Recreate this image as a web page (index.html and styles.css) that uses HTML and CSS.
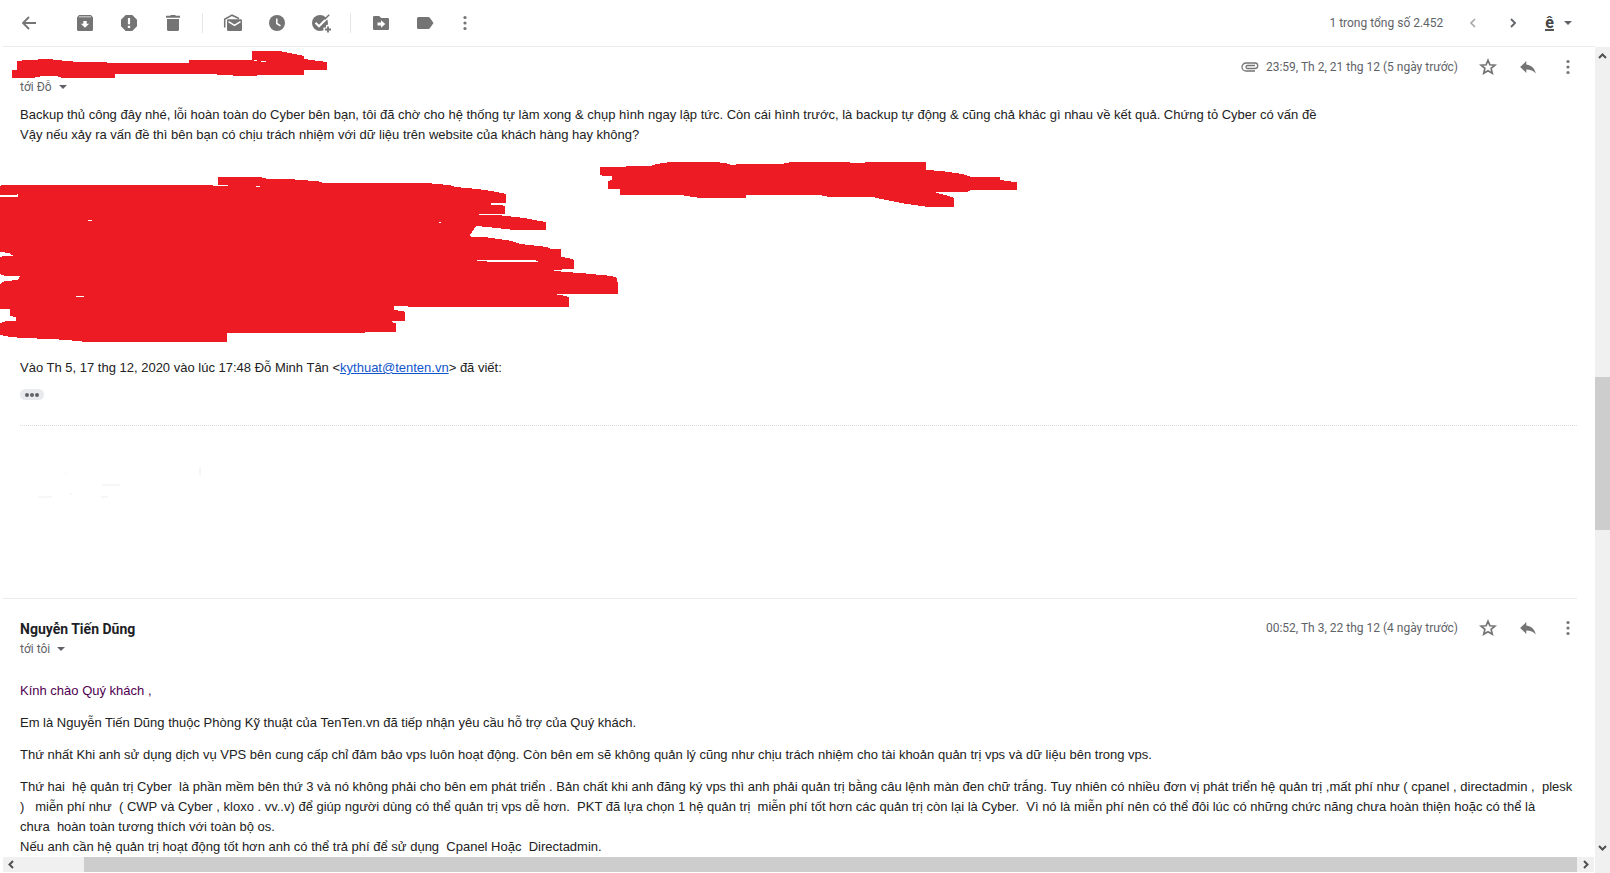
FILE: index.html
```html
<!DOCTYPE html>
<html lang="vi">
<head>
  <meta charset="UTF-8" />
  <meta name="viewport" content="width=device-width, initial-scale=1.0"/>
  <title>Hộp thư</title>
  <link rel="stylesheet" href="styles.css">
</head>
<body>

  <!-- Icons used more than once -->
  <svg class="sprite" aria-hidden="true">
    <symbol id="star" viewBox="0 0 20 20"><path d="M10 3.200l1.900 4.600 5 .4-3.800 3.200 1.200 4.900-4.300-2.600-4.300 2.600 1.200-4.900-3.800-3.200 5-.4z" fill="none" stroke="currentColor" stroke-width="1.700"/></symbol>
    <symbol id="reply" viewBox="0 0 20 20"><path d="M8.300 7.500V4.100L2.100 10l6.200 5.900v-3.500c4.300 0 7.300 1.300 9.500 4.200-.9-4.200-3.400-8.300-9.500-9.100z"/></symbol>
    <symbol id="more" viewBox="0 0 20 20"><circle cx="10" cy="4.500" r="1.600"/><circle cx="10" cy="10" r="1.600"/><circle cx="10" cy="15.500" r="1.600"/></symbol>
    <symbol id="caret" viewBox="0 0 8 4"><path d="M0 0h8L4 4z"/></symbol>
  </svg>

  <!-- Toolbar -->
  <header class="toolbar">
    <button class="tool back" aria-label="Quay lại"><svg viewBox="0 0 20 20"><path d="M10 4L4 10l6 6M4 10h13" fill="none" stroke="currentColor" stroke-width="1.800"/></svg></button>
    <button class="tool" aria-label="Lưu trữ"><svg viewBox="0 0 20 20"><path fill-rule="evenodd" d="M4 2h12l2 2.500V16.500a1.500 1.500 0 0 1-1.500 1.500h-13A1.500 1.500 0 0 1 2 16.500V4.500zM4.200 3.600l-.5.700h12.600l-.5-.7zM8.300 8v2.700H5.800L10 14.800l4.200-4.100h-2.500V8z"/></svg></button>
    <button class="tool" aria-label="Báo cáo spam"><svg viewBox="0 0 20 20"><path fill-rule="evenodd" d="M6.700 2h6.600L18 6.700v6.600L13.300 18H6.700L2 13.300V6.700zM8.900 5v6.300h2.200V5zM8.800 12.800v2.200h2.400v-2.200z"/></svg></button>
    <button class="tool" aria-label="Xóa"><svg viewBox="0 0 20 20"><path d="M3 2.800h4L8 2h4l1 .800h4v2H3zM4 6h12v10.500a1.500 1.500 0 0 1-1.500 1.500h-9A1.500 1.500 0 0 1 4 16.500z"/></svg></button>
    <span class="divider"></span>
    <button class="tool" aria-label="Đánh dấu là chưa đọc"><svg viewBox="0 0 20 20"><path d="M1.700 14.500V6.300L9 2.200l7 3.300" fill="none" stroke="currentColor" stroke-width="1.500"/><path d="M5.300 6.300h12.400q1.300 0 1.300 1.300v9.100q0 1.300-1.300 1.300H5.300Q4 18 4 16.700V7.600q0-1.300 1.300-1.300z"/><path d="M5.500 8.700l6 3.700 6-3.700" fill="none" stroke="#fff" stroke-width="1.500"/></svg></button>
    <button class="tool" aria-label="Tạm ẩn"><svg viewBox="0 0 20 20"><circle cx="10" cy="10" r="8"/><path d="M9.800 5.500v5l3.700 2.300" fill="none" stroke="#fff" stroke-width="1.500"/></svg></button>
    <button class="tool" aria-label="Thêm vào Việc cần làm"><svg viewBox="0 0 20 20"><circle cx="9" cy="10" r="8"/><path d="M4.500 9.800l3.500 3.500L17.500 3.800" fill="none" stroke="#fff" stroke-width="2"/><path d="M13.500 6.500L18.200 1.800" stroke="currentColor" stroke-width="1.500"/><path d="M17 12v9M12.500 16.500h9" stroke="#fff" stroke-width="4"/><path d="M17 13.500v6M14 16.500h6" stroke="currentColor" stroke-width="1.800"/></svg></button>
    <span class="divider"></span>
    <button class="tool" aria-label="Di chuyển tới"><svg viewBox="0 0 20 20"><path fill-rule="evenodd" d="M3.300 3h4.900l2 2h6.500q1.300 0 1.300 1.300v9.400q0 1.300-1.300 1.300H3.300Q2 17 2 15.700V4.300Q2 3 3.300 3zM10 7.300v2.200H6.500v3H10v2.200l4.300-3.700z"/></svg></button>
    <button class="tool" aria-label="Nhãn"><svg viewBox="0 0 20 20"><path d="M3.500 4h9.800q1 0 1.500.8L18.500 10l-3.700 5.200q-.5.800-1.500.8H3.500Q2 16 2 14.500v-9Q2 4 3.500 4z"/></svg></button>
    <button class="tool narrow" aria-label="Khác"><svg><use href="#more"/></svg></button>

    <div class="pager">
      <span>1 trong tổng số 2.452</span>
      <button class="page-btn faded" aria-label="Mới hơn"><svg viewBox="0 0 20 20"><path d="M12 6l-4 4 4 4" fill="none" stroke="currentColor" stroke-width="1.600"/></svg></button>
      <button class="page-btn" aria-label="Cũ hơn"><svg viewBox="0 0 20 20"><path d="M8 6l4 4-4 4" fill="none" stroke="currentColor" stroke-width="1.800"/></svg></button>
      <button class="lang" aria-label="Công cụ nhập liệu"><b>ê</b><svg class="caret"><use href="#caret"/></svg></button>
    </div>
  </header>

  <main class="viewer">
    <div class="thread">

      <article class="message first">
        <div class="message-head">
          <div class="sender">
            <svg class="name-mark" viewBox="0 50 331 28"><path d="M17 61L27 60 48 59 66 61 80 62 133 63H189V60H252V51H279L290 53 304 56V59L318 61 327 62V70H304V75H257V76H233V75L201 74H115V78H62L57 76H43L32 78H12V70H17Z"/><path class="gap" d="M254 60h3v1h-3zM261 61h5v1h-5z"/></svg>
            <button class="to">tới Đỗ <svg class="caret"><use href="#caret"/></svg></button>
          </div>
          <div class="actions">
            <svg class="clip" viewBox="0 0 18 10"><path d="M14 3.500H6.500a1.500 1.500 0 0 0 0 3H14a2.700 2.700 0 0 0 0-5.500H5a4 4 0 0 0 0 8h9" fill="none" stroke="currentColor" stroke-width="1.300"/></svg>
            <time>23:59, Th 2, 21 thg 12 (5 ngày trước)</time>
            <button class="action" aria-label="Gắn dấu sao"><svg><use href="#star"/></svg></button>
            <button class="action" aria-label="Trả lời"><svg><use href="#reply"/></svg></button>
            <button class="action" aria-label="Khác"><svg><use href="#more"/></svg></button>
          </div>
        </div>
        <div class="message-body">
          <p>Backup thủ công đây nhé, lỗi hoàn toàn do Cyber bên bạn, tôi đã chờ cho hệ thống tự làm xong &amp; chụp hình ngay lập tức. Còn cái hình trước, là backup tự động &amp; cũng chả khác gì nhau về kết quả. Chứng tỏ Cyber có vấn đề<br>
          Vậy nếu xảy ra vấn đề thì bên bạn có chịu trách nhiệm với dữ liệu trên website của khách hàng hay không?</p>
          <svg class="signature-mark" viewBox="0 160 1020 185">
            <path d="M0 187L2 186H213V187H228V186H218V178H260L268 180H291L298 181 318 182 323 184H428L436 185 449 186 456 188 477 190 491 192 506 195V204H491V206H501L505 207V215H479V216H498L524 219 534 221 546 223V231H515L505 230 488 228 476 227 470 236 471 238H484L512 242 520 245 547 248 551 250H561V258L569 259 574 261V270L550 271 564 273 581 274 612 277 617 279 618 287V295H552L561 296 569 298V308H408V307H394V311L402 312 405 313V322H393L390 323 396 324V333H365V334H227V343H87L67 341 51 340 23 339 11 338 0 336V324L7 322H16V318L10 317V310H0V285L5 282 18 281 20 277H5L0 275V258L3 257H14L9 254 0 253V198H18V195L15 196H0Z"/>
            <path d="M600 168H626V167H650L656 165 670 163H714L725 164 731 166 740 165H781L792 163H850V164H865V163H926V171L942 172 962 175 971 178H1000V181L1015 183H1017V191H971L967 193H934L945 196 954 199V208H928L907 205 891 202 881 200 873 198H829L819 196H746V199H700L681 196H620V190H608V182L612 181V177H604L600 176Z"/>
            <path class="gap" d="M477 261H533L538 262V263H487V262H477ZM88 221h4v1h-4zM76 297h8v1h-8zM439 223h2v1h-2zM256 187h4v1h-4z"/>
          </svg>
          <p>Vào Th 5, 17 thg 12, 2020 vào lúc 17:48 Đỗ Minh Tân &lt;<a href="mailto:kythuat@tenten.vn">kythuat@tenten.vn</a>&gt; đã viết:</p>
          <button class="trimmed" aria-label="Hiện nội dung được rút gọn"><svg viewBox="0 0 24 11"><circle cx="7" cy="6" r="2"/><circle cx="12" cy="6" r="2"/><circle cx="17" cy="6" r="2"/></svg></button>
        </div>
        <div class="message-end">
          <svg viewBox="0 460 220 50"><path d="M200 468v9M38 498h14M101 498h7M102 486h18M65 474h1M70 495h2"/></svg>
        </div>
      </article>

      <article class="message second">
        <div class="message-head">
          <div class="sender">
            <h3>Nguyễn Tiến Dũng</h3>
            <button class="to">tới tôi <svg class="caret"><use href="#caret"/></svg></button>
          </div>
          <div class="actions">
            <time>00:52, Th 3, 22 thg 12 (4 ngày trước)</time>
            <button class="action" aria-label="Gắn dấu sao"><svg><use href="#star"/></svg></button>
            <button class="action" aria-label="Trả lời"><svg><use href="#reply"/></svg></button>
            <button class="action" aria-label="Khác"><svg><use href="#more"/></svg></button>
          </div>
        </div>
        <div class="message-body">
          <p class="greeting">Kính chào Quý khách ,</p>
          <p>Em là Nguyễn Tiến Dũng thuộc Phòng Kỹ thuật của TenTen.vn đã tiếp nhận yêu cầu hỗ trợ của Quý khách.</p>
          <p>Thứ nhất Khi anh sử dụng dịch vụ VPS bên cung cấp chỉ đảm bảo vps luôn hoạt động. Còn bên em sẽ không quản lý cũng như chịu trách nhiệm cho tài khoản quản trị vps và dữ liệu bên trong vps.</p>
          <p>Thứ hai&nbsp; hệ quản trị Cyber&nbsp; là phần mềm bên thứ 3 và nó không phải cho bên em phát triển . Bản chất khi anh đăng ký vps thì anh phải quản trị bằng câu lệnh màn đen chữ trắng. Tuy nhiên có nhiều đơn vị phát triển hệ quản trị ,mất phí như ( cpanel , directadmin ,&nbsp; plesk<br>
          )&nbsp; &nbsp;miễn phí như&nbsp; ( CWP và Cyber , kloxo . vv..v) để giúp người dùng có thể quản trị vps dễ hơn.&nbsp; PKT đã lựa chọn 1 hệ quản trị&nbsp; miễn phí tốt hơn các quản trị còn lại là Cyber.&nbsp; Vì nó là miễn phí nên có thể đôi lúc có những chức năng chưa hoàn thiện hoặc có thể là<br>
          chưa&nbsp; hoàn toàn tương thích với toàn bộ os.<br>
          Nếu anh cần hệ quản trị hoạt động tốt hơn anh có thể trả phí để sử dụng&nbsp; Cpanel Hoặc&nbsp; Directadmin.</p>
        </div>
      </article>
    </div>

    <!-- Scrollbars -->
    <div class="scroll-y">
      <svg viewBox="0 0 15 17"><path d="M4 11l3.500-3.500L11 11" /></svg>
      <div class="track-y"><span class="thumb-y"></span></div>
      <svg viewBox="0 0 15 17"><path d="M4 6l3.500 3.500L11 6"/></svg>
    </div>
    <div class="scroll-x">
      <svg viewBox="0 0 17 15"><path d="M10 4L6.500 7.500 10 11"/></svg>
      <div class="track-x"><span class="thumb-x"></span></div>
      <svg viewBox="0 0 17 15"><path d="M7 4l3.500 3.500L7 11"/></svg>
    </div>
  </main>

</body>
</html>
```
FILE: styles.css
```css
* {
  box-sizing: border-box;
  margin: 0;
  padding: 0;
}

body {
  height: 100vh;
  display: flex;
  flex-direction: column;
  overflow: hidden;
  background: #fff;
  color: #222;
  font-family: Roboto, sans-serif;
  font-size: 12px;
}

button {
  border: 0;
  background: none;
  color: inherit;
  font: inherit;
  cursor: pointer;
}

svg {
  display: block;
  fill: currentColor;
}

.sprite {
  display: none;
}

.caret {
  width: 8px;
  height: 4px;
}

/* Toolbar */
.toolbar {
  flex: none;
  display: flex;
  align-items: center;
  height: 47px;
  margin: 0 15px 0 3px;
  padding-left: 4px;
  border-bottom: 1px solid #ebebeb;
  color: #747474;
}

.tool {
  display: flex;
  justify-content: center;
  width: 44px;
}

.tool svg,
.page-btn svg,
.action svg {
  width: 20px;
  height: 20px;
  overflow: visible;
}

.back {
  margin-right: 12px;
}

.narrow {
  width: 36px;
}

.divider {
  width: 1px;
  height: 20px;
  margin: 0 8px 0 7px;
  background: #e5e5e5;
}

.pager {
  display: flex;
  align-items: center;
  margin-left: auto;
  padding-right: 23px;
  color: #5f6368;
}

.pager span {
  margin-right: 10px;
}

.page-btn {
  display: flex;
  justify-content: center;
  width: 40px;
}

.faded {
  color: #a5a5a5;
}

.lang {
  display: flex;
  align-items: center;
  gap: 10px;
  margin-left: 12px;
}

.lang b {
  border-bottom: 2px solid #555;
  color: #444;
  font-size: 16px;
  line-height: 13px;
}

/* Thread and its scrollbars */
.viewer {
  flex: 1;
  min-height: 0;
  display: grid;
  grid-template-columns: 1fr 15px;
  grid-template-rows: 1fr 16px;
}

.thread {
  min-width: 0;
  overflow: hidden;
}

.message-head {
  display: flex;
  justify-content: space-between;
  align-items: flex-start;
}

.first {
  padding: 0 18px 0 20px;
}

.first .message-head {
  padding-top: 3px;
}

.name-mark,
.signature-mark {
  margin-left: -20px;
  color: #ed1c24;
  shape-rendering: crispEdges;
}

.name-mark {
  width: 331px;
  height: 28px;
}

.gap {
  fill: #fff;
}

.sender h3 {
  color: #202124;
  font-size: 14px;
  font-weight: 700;
  line-height: 22px;
}

.to {
  display: flex;
  align-items: center;
  gap: 7px;
  color: #5f6368;
  line-height: 18px;
}

.actions {
  display: flex;
  align-items: center;
  height: 20px;
  margin-right: -11px;
  color: #747474;
}

.first .actions {
  margin-top: 7px;
}

.clip {
  width: 18px;
  height: 10px;
  margin-right: 7px;
}

time {
  margin-right: 10px;
  color: #5f6368;
}

.action {
  display: flex;
  justify-content: center;
  width: 40px;
}

.message-body {
  color: #222;
  font-family: "Liberation Sans", Arial, sans-serif;
  font-size: 13px;
  line-height: 20px;
}

.first .message-body {
  padding-top: 9px;
}

.message-body a {
  color: #1155cc;
}

.signature-mark {
  width: 1020px;
  height: 185px;
  margin-top: 14px;
  margin-bottom: 14px;
}

.trimmed {
  display: block;
  width: 24px;
  height: 11px;
  margin-top: 11px;
  border-radius: 6px;
  background: #e8eaed;
  color: #5f6368;
}

.message-end {
  height: 173px;
  margin-top: 25px;
  padding-top: 33px;
  border-top: 1px dotted #dcdcdc;
}

.message-end svg {
  width: 220px;
  height: 50px;
  margin-left: -20px;
  stroke: #eee;
}

.second {
  margin: 0 18px 0 3px;
  padding-left: 17px;
  border-top: 1px solid #ebebeb;
}

.second .message-head {
  padding-top: 19px;
}

.second .message-body {
  padding-top: 23px;
}

.second .message-body p {
  margin-bottom: 12px;
}

.second .message-body .greeting {
  color: #500050;
}

.scroll-y,
.scroll-x {
  display: flex;
  background: #f0f0f0;
  color: #505050;
}

.scroll-y {
  grid-row: 1 / 3;
  grid-column: 2;
  flex-direction: column;
  padding-bottom: 16px;
}

.scroll-x {
  margin: 0 1px 1px 3px;
}

.scroll-y svg,
.scroll-x svg {
  flex: none;
  fill: none;
  stroke: currentColor;
  stroke-width: 2;
}

.scroll-y svg {
  width: 15px;
  height: 17px;
}

.scroll-x svg {
  width: 17px;
  height: 15px;
}

.track-y,
.track-x {
  flex: 1;
  display: flex;
}

.track-y {
  flex-direction: column;
  padding-top: 313px;
}

.thumb-y {
  height: 153px;
  background: #cdcdcd;
}

.track-x {
  padding-left: 64px;
}

.thumb-x {
  flex: 1;
  background: #cdcdcd;
}
```
